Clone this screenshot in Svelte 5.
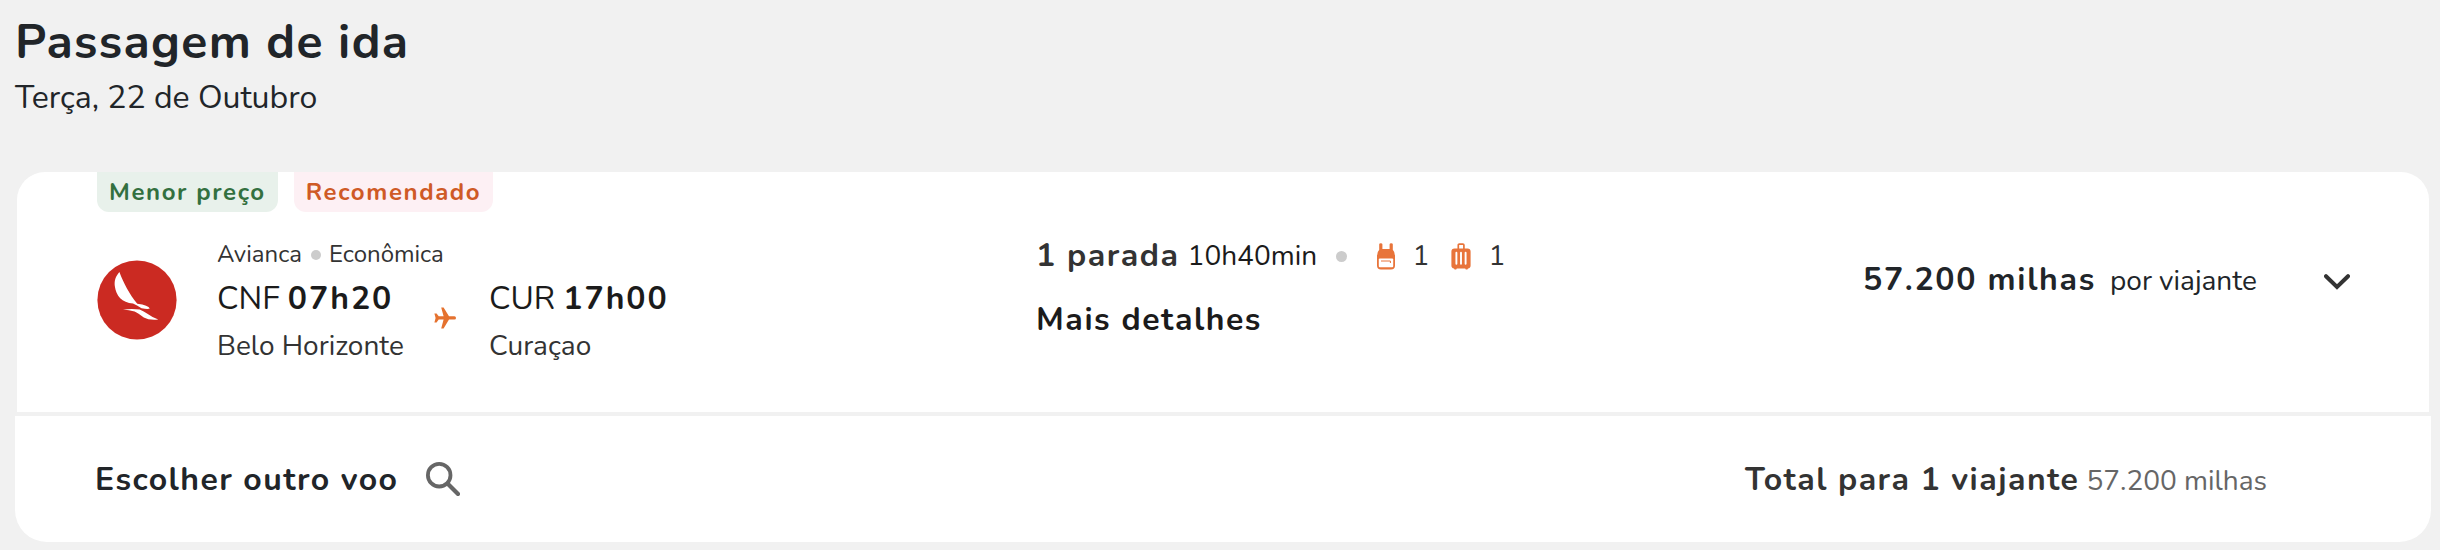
<script>
  const badges = [
    { text: 'Menor preço', tone: 'green' },
    { text: 'Recomendado', tone: 'orange' }
  ];
</script>

<main>
  <header>
    <h1>Passagem de ida</h1>
    <p>Terça, 22 de Outubro</p>
  </header>

  <section class="card">
    <div class="badges">
      {#each badges as b}<span class="badge {b.tone}">{b.text}</span>{/each}
    </div>
    <div class="body">
      <svg class="logo" viewBox="0 0 80 80" aria-hidden="true">
        <circle cx="40" cy="40" r="39.6" fill="#cb2a22" />
        <path d="M22.4 12C18.4 16.5 17.2 21 17.8 26C19 36 25 42.6 36 43.6L40 45.6L44.5 48.3Q51 49.6 52.8 48.6Q51.5 45 40.3 43.7C32 33.5 27 24 22.4 12Z" fill="#fff" />
        <path d="M26 49.5Q34 48.8 42.7 49.4Q47 51.2 50 53.6Q55.5 57.6 61.3 59.6Q52 60.6 46.8 57.5Q41 53.2 37.6 51.6Q32 50 26 49.5Z" fill="#fff" />
      </svg>

      <div class="flight">
        <div class="airline"><span>Avianca</span><i class="dot small"></i><span>Econômica</span></div>
        <div class="route">
          <div class="stop origin">
            <div class="when"><span class="code">CNF</span><b>07h20</b></div>
            <div class="city">Belo Horizonte</div>
          </div>
          <svg class="plane" viewBox="0 0 22 22" aria-hidden="true">
            <path d="M7.2 0.4H9.6L15 9.2H20.4Q22 9.4 22 10.9T20.4 12.6H15L9.6 21.6H7.2L9.6 12.6H4.7L2.6 15.4H0.4L1.6 10.9L0.4 6.4H2.6L4.7 9.2H9.6Z" fill="#e5722f" />
          </svg>
          <div class="stop">
            <div class="when"><span class="code">CUR</span><b>17h00</b></div>
            <div class="city">Curaçao</div>
          </div>
        </div>
      </div>

      <div class="details">
        <div class="summary">
          <b>1 parada</b>
          <span class="duration">10h40min</span>
          <i class="dot"></i>
          <svg class="backpack" viewBox="0 0 20 27" aria-hidden="true">
            <path d="M3.2 1.2Q3.2 0.2 4.8 0.2T6.4 1.2V6H13.6V1.2Q13.6 0.2 15.2 0.2T16.8 1.2V6.8Q19 9 19 13V22.6Q19 26.6 15 26.6H5Q1 26.6 1 22.6V13Q1 9 3.2 6.8Z" fill="#e8743a" />
            <rect x="2.8" y="15.4" width="14.4" height="8.8" rx="1" fill="#fff" />
            <path d="M5 18H14.4V20" fill="none" stroke="#e8743a" stroke-width="1" />
          </svg>
          <span class="count">1</span>
          <svg class="suitcase" viewBox="0 0 20 27" aria-hidden="true">
            <path d="M7.3 6V2.1Q7.3 1.1 8.3 1.1H11.9Q12.9 1.1 12.9 2.1V6" fill="none" stroke="#e8743a" stroke-width="1.7" />
            <path d="M3.5 5.4H16.5Q19.6 5.4 19.6 8.5V22.5Q19.6 25.2 17 25.4L16.4 26.6H14.8L14.2 25.4H5.8L5.2 26.6H3.6L3 25.4Q0.4 25.2 0.4 22.5V8.5Q0.4 5.4 3.5 5.4Z" fill="#e8743a" />
            <path d="M5.4 9.8V20.8M10 9.8V20.8M14.6 9.8V20.8" stroke="#fff" stroke-width="1.9" stroke-linecap="round" />
          </svg>
          <span class="count">1</span>
        </div>
        <div class="more">Mais detalhes</div>
      </div>

      <div class="price"><b>57.200 milhas</b><span>por viajante</span></div>
      <svg class="chevron" viewBox="0 0 26 16" aria-hidden="true">
        <path d="M2 2.2L13 13L24 2.2" fill="none" stroke="#333" stroke-width="4" stroke-linecap="round" />
      </svg>
    </div>
  </section>

  <footer>
    <b class="other">Escolher outro voo</b>
    <svg class="search" viewBox="0 0 34 34" aria-hidden="true">
      <circle cx="13.2" cy="13.2" r="11.3" fill="none" stroke="#666" stroke-width="3.8" />
      <path d="M22.5 22.5L32 32" stroke="#666" stroke-width="4.2" stroke-linecap="round" />
    </svg>
    <div class="total"><b>Total para 1 viajante</b><span>57.200 milhas</span></div>
  </footer>
</main>

<style>
  :global(body) { background: #f1f1f1; }
  main {
    box-sizing: border-box;
    width: 2440px;
    height: 550px;
    padding: 10px 9px 8px 15px;
    font-family: Nunito, Lato, sans-serif;
    color: #212529;
    display: flex;
    flex-direction: column;
    white-space: nowrap;
  }
  header { height: 162px; }
  h1 { margin: 0; font-size: 48px; font-weight: 680; line-height: 64px; letter-spacing: 1.3px; }
  p { margin: 2px 0 0; font-size: 32px; line-height: 44px; }
  b, .more { font-size: 32px; font-weight: 680; letter-spacing: 1.55px; }
  svg { display: block; flex: none; }

  .card {
    box-sizing: border-box;
    height: 240px;
    margin: 0 2px;
    padding-left: 80px;
    background: #fff;
    border-radius: 28px 28px 0 0;
  }
  .badges { display: flex; gap: 16px; }
  .badge {
    height: 40px;
    padding: 0 12px;
    border-radius: 0 0 12px 12px;
    font-size: 24px;
    font-weight: 700;
    line-height: 40px;
    letter-spacing: 1.6px;
  }
  .green { color: #33703f; background: #e8f1eb; }
  .orange { color: #cf5a26; background: #fdf0f4; }

  .body { display: flex; align-items: flex-start; padding-top: 26px; }
  .logo { width: 80px; height: 80px; margin-top: 22px; }
  .flight { width: 819px; margin-left: 40px; }
  .airline { display: flex; align-items: center; font-size: 24px; line-height: 32px; color: #333; }
  .dot { width: 11px; height: 11px; border-radius: 50%; background: #ccc; flex: none; }
  .small { width: 10px; height: 10px; margin: 2px 8px 0 9px; }
  .route { display: flex; margin-top: 7px; }
  .origin { width: 217px; }
  .when { display: flex; gap: 8px; font-size: 32px; line-height: 44px; color: #1b1b1b; }
  .when b { letter-spacing: 2px; }
  .city { margin-top: 7px; font-size: 28px; line-height: 36px; color: #333; }
  .plane { width: 22px; height: 22px; margin: 30px 33px 0 0; }

  .details { width: 827px; margin-top: -2px; }
  .summary { display: flex; align-items: center; height: 40px; font-size: 28px; line-height: 40px; color: #333; }
  .summary b { min-width: 143px; }
  .duration { min-width: 130px; margin: 0 18px 0 8px; color: #1b1b1b; }
  .backpack { width: 20px; height: 27px; margin-left: 29px; }
  .suitcase { width: 20px; height: 27px; margin-left: 22px; }
  .count { margin-left: 17px; }
  .more { margin-top: 24px; line-height: 40px; color: #1b1b1b; }

  .price { display: flex; align-items: baseline; gap: 14px; width: 461px; margin-top: 22px; font-size: 28px; line-height: 40px; }
  .price b { letter-spacing: 1.7px; }
  .chevron { width: 26px; height: 16px; margin-top: 36px; }

  footer {
    box-sizing: border-box;
    display: flex;
    align-items: center;
    height: 126px;
    margin-top: 4px;
    padding: 0 164px 0 80px;
    background: #fff;
    border-radius: 0 0 32px 32px;
  }
  .other { min-width: 303px; letter-spacing: 1.45px; }
  .search { width: 34px; height: 34px; margin-left: 28px; }
  .total { display: flex; align-items: baseline; gap: 7px; margin: 2px 0 0 auto; font-size: 28px; line-height: 40px; color: #666; }
  .total b { color: #333; letter-spacing: 1.45px; }
</style>
